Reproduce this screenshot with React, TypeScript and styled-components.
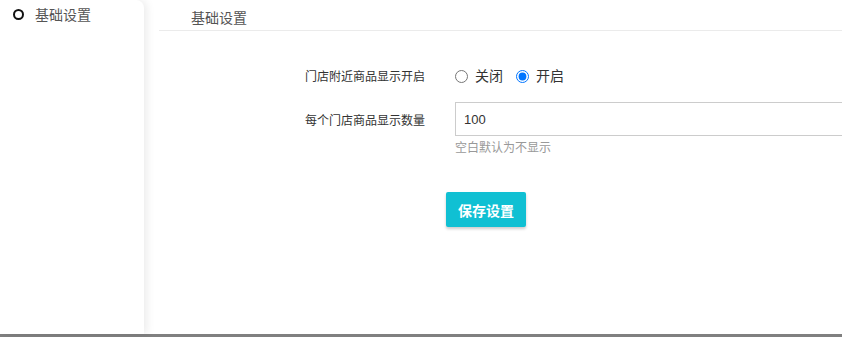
import { useState } from 'react';
import styled, { createGlobalStyle } from 'styled-components';

const GlobalStyle = createGlobalStyle`
    html, body {
        margin: 0;
        padding: 0;
        background: #fff;
        overflow: hidden;
    }
    body {
        font-family: "Noto Sans CJK SC", "Noto Sans", "Liberation Sans", sans-serif;
        color: #333;
    }
`;

const PageWrapper = styled.div`
    width: 842px;
    height: 337px;
    display: grid;
    grid-template-rows: 1fr 3px;
    overflow: hidden;
`;

const Body = styled.div`
    display: flex;
    min-height: 0;
`;

const BottomBar = styled.div`
    background: #808080;
`;

const Sidebar = styled.aside`
    width: 144px;
    flex-shrink: 0;
    background: #fff;
    border-top-right-radius: 8px;
    box-shadow: 3px 0 8px rgba(0, 0, 0, 0.08);
    position: relative;
    z-index: 1;
`;

const MenuItem = styled.div`
    display: flex;
    align-items: center;
    gap: 11px;
    height: 30px;
    padding: 0 0 0 13px;
    margin-top: -1px;
    font-size: 14px;
    color: #555;
`;

const Ring = styled.span`
    width: 7px;
    height: 7px;
    border: 2px solid #111;
    border-radius: 50%;
`;

const Main = styled.main`
    flex: 1;
    min-width: 0;
    padding-left: 15px;
`;

const Header = styled.div`
    height: 26px;
    display: flex;
    align-items: center;
    padding: 4px 0 0 32px;
    border-bottom: 1px solid #ebebeb;
    font-size: 14px;
    color: #555;
`;

const Form = styled.div`
    display: grid;
    grid-template-columns: 266px 1fr;
    column-gap: 30px;
    row-gap: 10px;
    padding-top: 27px;
`;

const Label = styled.div`
    display: flex;
    align-items: center;
    justify-content: flex-end;
    height: 34px;
    font-size: 12px;
    color: #333;
`;

const RadioGroup = styled.div`
    display: flex;
    align-items: center;
    height: 34px;
    gap: 13px;
`;

const RadioOption = styled.label`
    display: flex;
    align-items: center;
    gap: 7px;
    font-size: 14px;
    color: #333;
    cursor: pointer;

    input {
        margin: 2px 0 0;
        width: 13px;
        height: 13px;
    }
`;

const Field = styled.div`
    display: flex;
    flex-direction: column;
`;

const TextInput = styled.input`
    width: 520px;
    height: 34px;
    box-sizing: border-box;
    border: 1px solid #ccc;
    padding: 0 8px;
    font-family: "Liberation Sans", "Noto Sans CJK SC", sans-serif;
    font-size: 13px;
    color: #333;
    outline: none;
`;

const Hint = styled.div`
    margin-top: 2px;
    font-size: 12px;
    color: #999;
    line-height: 18px;
`;

const ButtonRow = styled.div`
    padding: 36px 0 0 287px;
`;

const SaveButton = styled.button`
    width: 80px;
    height: 35px;
    border: none;
    border-radius: 2px;
    background: #10c0d3;
    color: #fff;
    font-family: "Noto Sans CJK SC", sans-serif;
    font-size: 14px;
    font-weight: 700;
    box-shadow: 0 2px 3px rgba(0, 0, 0, 0.2);
    cursor: pointer;
`;

export default function App() {
    const [enabled, setEnabled] = useState(true);
    const [count, setCount] = useState('100');

    return (
        <>
            <GlobalStyle />
            <PageWrapper>
                <Body>
                    <Sidebar>
                        <MenuItem>
                            <Ring />
                            基础设置
                        </MenuItem>
                    </Sidebar>
                    <Main>
                        <Header>基础设置</Header>
                        <Form>
                            <Label>门店附近商品显示开启</Label>
                            <RadioGroup>
                                <RadioOption>
                                    <input type='radio' name='show' checked={!enabled} onChange={() => setEnabled(false)} />
                                    关闭
                                </RadioOption>
                                <RadioOption>
                                    <input type='radio' name='show' checked={enabled} onChange={() => setEnabled(true)} />
                                    开启
                                </RadioOption>
                            </RadioGroup>
                            <Label>每个门店商品显示数量</Label>
                            <Field>
                                <TextInput value={count} onChange={e => setCount(e.target.value)} />
                                <Hint>空白默认为不显示</Hint>
                            </Field>
                        </Form>
                        <ButtonRow>
                            <SaveButton>保存设置</SaveButton>
                        </ButtonRow>
                    </Main>
                </Body>
                <BottomBar />
            </PageWrapper>
        </>
    );
}
